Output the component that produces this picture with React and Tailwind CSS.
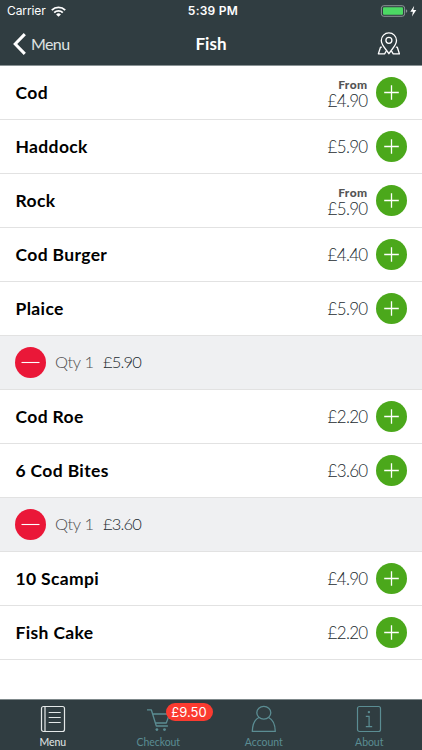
const ROWS = [
  { type: 'item', name: 'Cod', price: '£4.90', from: true },
  { type: 'item', name: 'Haddock', price: '£5.90' },
  { type: 'item', name: 'Rock', price: '£5.90', from: true },
  { type: 'item', name: 'Cod Burger', price: '£4.40' },
  { type: 'item', name: 'Plaice', price: '£5.90' },
  { type: 'qty', qty: 1, price: '£5.90' },
  { type: 'item', name: 'Cod Roe', price: '£2.20' },
  { type: 'item', name: '6 Cod Bites', price: '£3.60' },
  { type: 'qty', qty: 1, price: '£3.60' },
  { type: 'item', name: '10 Scampi', price: '£4.90' },
  { type: 'item', name: 'Fish Cake', price: '£2.20' }
];

function StatusBar() {
  return (
    <div className="grid h-[22px] grid-cols-3 items-center pl-[7px] pr-[5px] font-['Inter',sans-serif] text-[12px] leading-none text-white">
      <div className="flex items-center gap-[5px]">
        <span className="tracking-[-0.1px]">Carrier</span>
        <svg width="15" height="11" viewBox="0 0 15 11" fill="none" stroke="currentColor" strokeWidth="1.9">
          <path d="M0.8 4.1a9.6 9.6 0 0 1 13.4 0" />
          <path d="M3.2 6.6a6.2 6.2 0 0 1 8.6 0" />
          <path d="M7.5 10.8 5.1 8.4a3.5 3.5 0 0 1 4.8 0z" fill="currentColor" stroke="none" />
        </svg>
      </div>
      <span className="whitespace-nowrap pl-[2px] text-center font-semibold tracking-[0.25px]">5:39 PM</span>
      <div className="flex items-center justify-end">
        <svg width="37" height="12" viewBox="0 0 37 12" fill="none">
          <rect x="1.4" y="0.7" width="23.2" height="10.6" rx="2.4" stroke="#8b9596" />
          <rect x="3" y="2.3" width="20" height="7.4" rx="1" fill="#4cd964" />
          <path d="M25.9 4.2q1.4.4 1.4 1.8t-1.4 1.8z" fill="#8b9596" />
          <path d="M34.2.8 30.3 6.800h2.600l-.9 4.700 4.300-6.500h-2.900z" fill="#fff" />
        </svg>
      </div>
    </div>
  );
}

function NavBar() {
  return (
    <div className="grid h-[43px] grid-cols-3 items-center pl-[13px] pr-[22px] text-white">
      <div className="flex items-center gap-[5px]">
        <svg width="13" height="22" viewBox="0 0 13 22" fill="none" stroke="currentColor" strokeWidth="3">
          <path d="M11.8 1.1 2.2 11l9.6 9.9" />
        </svg>
        <span className="text-[16px] leading-none tracking-[-0.6px] text-[#dfe3e3]">Menu</span>
      </div>
      <h1 className="pl-[9px] text-center text-[17px] font-bold leading-none">Fish</h1>
      <div className="flex justify-end">
        <svg width="23" height="23" viewBox="0 0 23 23" fill="none" stroke="currentColor" strokeWidth="1.3" strokeLinejoin="round" strokeLinecap="round">
          <path d="M11.900 21.8C9.400 17.400 4.300 13.400 4.300 8.500a7.600 7.600 0 0 1 15.200 0c0 4.900-5.100 8.900-7.600 13.300z" />
          <circle cx="11.900" cy="8.300" r="3" />
          <path d="M4.400 15.200H3.500L1.400 21.800h6.200l1.500-2.400M19.400 15.200h.9l2.100 6.600h-6.200l-1.500-2.400" />
        </svg>
      </div>
    </div>
  );
}

function RoundButton({ kind }) {
  if (kind === 'remove') {
    return (
      <button aria-label="Remove" className="size-[31px] shrink-0 rounded-full bg-[#ea1738] text-white">
        <svg width="31" height="31" viewBox="0 0 31 31" stroke="currentColor" strokeWidth="1.1">
          <path d="M6.500 15.500h18" />
        </svg>
      </button>
    );
  }
  return (
    <button aria-label="Add" className="size-[31px] shrink-0 rounded-full bg-[#4ba81b] text-white">
      <svg width="31" height="31" viewBox="0 0 31 31" stroke="currentColor" strokeWidth="1.3">
        <path d="M8.200 15.500h14.600M15.500 8.200v14.600" />
      </svg>
    </button>
  );
}

function ItemRow({ name, price, from }) {
  return (
    <li className="flex h-[54px] items-center border-b border-[#e2e2e2] bg-white pl-[15.5px] pr-[15px]">
      <span className="flex-1 text-[17.5px] font-bold leading-none tracking-[0.35px] text-black">{name}</span>
      <div className={`mr-[8.5px] text-right ${from ? 'pt-[3px]' : ''}`}>
        {from && <div className="text-[12px] font-black leading-[12px] tracking-[0.4px] text-[#555]">From</div>}
        <div className={`text-[17px] font-light tracking-[-0.7px] text-[#1c2b30] ${from ? 'leading-[19px]' : 'leading-none'}`}>
          {price}
        </div>
      </div>
      <RoundButton kind="add" />
    </li>
  );
}

function QtyRow({ qty, price }) {
  return (
    <li className="flex h-[54px] items-center border-b border-[#e2e2e2] bg-[#eff0f2] pl-[15px] text-[16.5px] font-light leading-none">
      <RoundButton kind="remove" />
      <span className="ml-[9px] w-[48px] whitespace-nowrap pb-px tracking-[-0.4px] text-[#4c4c4c]">Qty {qty}</span>
      <span className="pb-px tracking-[-0.85px] text-[#1c2b30]">{price}</span>
    </li>
  );
}

function MenuIcon() {
  return (
    <svg width="26" height="28" viewBox="0 0 26 28" fill="none" stroke="currentColor" strokeWidth="1.2">
      <rect x="1.500" y="1.500" width="23" height="25" rx="2" />
      <path d="M5 1.500v25M8.700 7.500h12M8.700 12.500h12M8.700 17.500h12" />
    </svg>
  );
}

function CartIcon() {
  return (
    <svg width="26" height="28" viewBox="0 0 26 28" fill="none" stroke="currentColor" strokeWidth="1.3" strokeLinejoin="round">
      <path d="M2 4.800h4.300l5 16.200h11.600M7.500 9h17l-3.200 9H10.300" />
      <circle cx="11.900" cy="24.600" r="1.400" fill="currentColor" stroke="none" />
      <circle cx="19.500" cy="24.600" r="1.400" fill="currentColor" stroke="none" />
    </svg>
  );
}

function AccountIcon() {
  return (
    <svg width="26" height="28" viewBox="0 0 26 28" fill="none" stroke="currentColor" strokeWidth="1.3" strokeLinejoin="round">
      <ellipse cx="12.800" cy="7.800" rx="7" ry="6.400" />
      <path d="M8 12.500C3.800 14.500 1.500 19 1.300 26.400h23c-.2-7.400-2.500-11.900-6.700-13.900" />
    </svg>
  );
}

function AboutIcon() {
  return (
    <svg width="26" height="28" viewBox="0 0 26 28" fill="none" stroke="currentColor" strokeWidth="1.2">
      <rect x="1.500" y="1.500" width="23" height="25" rx="2" />
      <path d="M9.800 11.300h3.300v10.400M9.800 21.700h6.400" />
      <circle cx="12.900" cy="7.100" r="1.200" fill="currentColor" stroke="none" />
    </svg>
  );
}

const TABS = [
  { label: 'Menu', Icon: MenuIcon, active: true },
  { label: 'Checkout', Icon: CartIcon, badge: '£9.50' },
  { label: 'Account', Icon: AccountIcon },
  { label: 'About', Icon: AboutIcon }
];

function TabBar() {
  return (
    <nav className="grid h-[51px] grid-cols-4 border-t border-[#7f898b] bg-[#303d41]">
      {TABS.map(({ label, Icon, active, badge }) => (
        <div
          key={label}
          className={`relative flex flex-col items-center pt-[5px] ${active ? 'text-[#e4e8e8]' : 'text-[#5b8d93]'}`}
        >
          <Icon />
          <span className="mt-[3px] text-[10.5px] leading-[13px] tracking-[-0.05px]">{label}</span>
          {badge && (
            <span className="absolute left-[60px] top-[3px] flex h-[18px] w-[47px] items-center justify-center rounded-full bg-[#fb3b30] font-['Inter',sans-serif] text-[13px] leading-none text-white">
              {badge}
            </span>
          )}
        </div>
      ))}
    </nav>
  );
}

export default function App() {
  return (
    <div className="flex h-[750px] w-[422px] flex-col overflow-hidden bg-white font-['Lato',sans-serif]">
      <header className="h-[66px] border-b border-[#8a9395] bg-[#303d41]">
        <StatusBar />
        <NavBar />
      </header>
      <ul className="flex-1">
        {ROWS.map((row, i) => (row.type === 'qty' ? <QtyRow key={i} {...row} /> : <ItemRow key={i} {...row} />))}
      </ul>
      <TabBar />
    </div>
  );
}
